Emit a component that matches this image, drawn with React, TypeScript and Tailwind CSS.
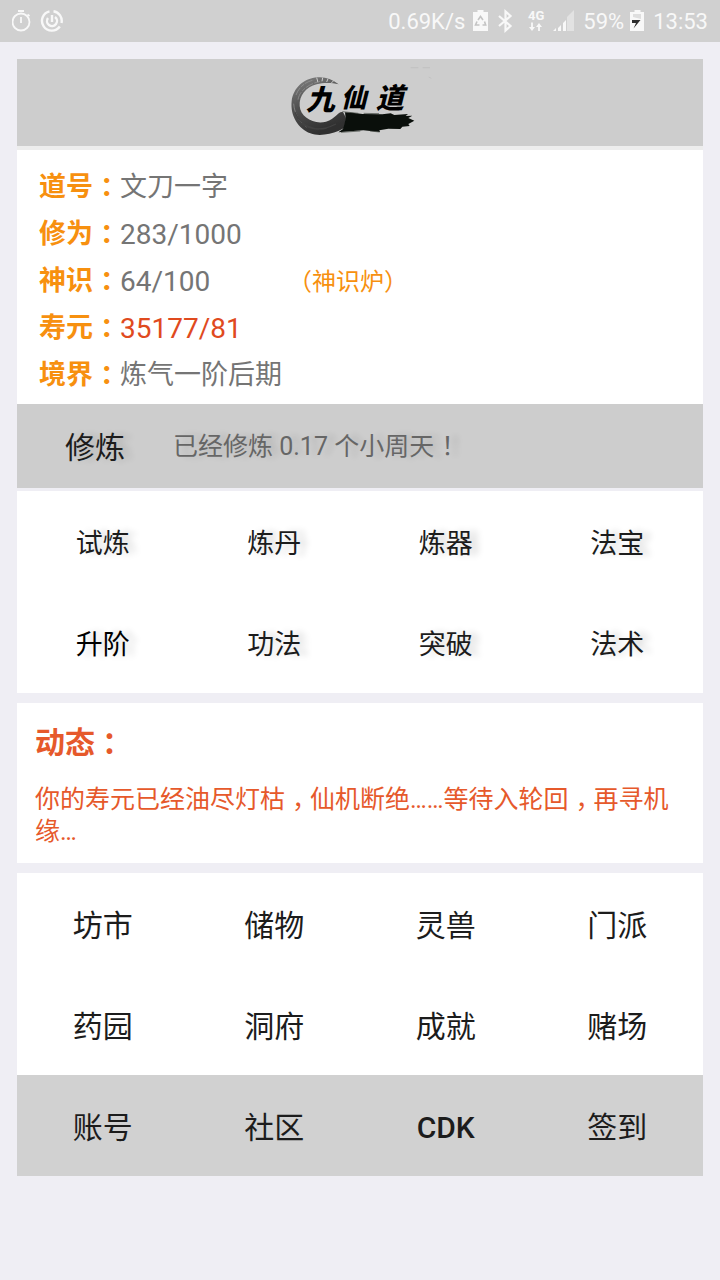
import type { ReactElement, ReactNode } from "react";

interface MenuItem {
  label: string;
  className?: string;
}

interface Stat {
  label: string;
  value: string;
  valueClass: string;
  extra?: string;
}

const stats: Stat[] = [
  { label: "道号", value: "文刀一字", valueClass: "text-[27px] text-[#757575]" },
  { label: "修为", value: "283/1000", valueClass: "text-[28px] text-[#757575]" },
  { label: "神识", value: "64/100", valueClass: "text-[28px] text-[#757575]", extra: "（神识炉）" },
  { label: "寿元", value: "35177/81", valueClass: "text-[28px] text-[#e04a1e]" },
  { label: "境界", value: "炼气一阶后期", valueClass: "text-[27px] text-[#757575]" },
];

const training: MenuItem[] = [
  { label: "试炼" },
  { label: "炼丹" },
  { label: "炼器" },
  { label: "法宝" },
  { label: "升阶", className: "text-black" },
  { label: "功法" },
  { label: "突破" },
  { label: "法术" },
];

const places: MenuItem[] = [
  { label: "坊市" },
  { label: "储物" },
  { label: "灵兽" },
  { label: "门派" },
  { label: "药园" },
  { label: "洞府" },
  { label: "成就" },
  { label: "赌场" },
];

const account: MenuItem[] = [
  { label: "账号" },
  { label: "社区" },
  { label: "CDK", className: "font-medium" },
  { label: "签到" },
];

// full-width punctuation, moved to the middle of its cell
function Mark({ children }: { children: ReactNode }): ReactElement {
  return <span className="-mr-[7px] pl-[7px]">{children}</span>;
}

function StatusBar(): ReactElement {
  return (
    <div className="flex h-[42px] items-center bg-[#d0d0d0] px-3 text-[22px] text-[#f8f8f8]">
      <svg width="20" height="24" viewBox="0 0 20 24" fill="none" stroke="currentColor" strokeWidth="1.8" aria-hidden="true">
        <circle cx="9" cy="13" r="8.5" />
        <path d="M6 2h6M9 8v6M15.5 5.5l2 1.5" />
      </svg>
      <svg className="ml-2" width="24" height="24" viewBox="0 0 24 24" fill="none" stroke="currentColor" strokeWidth="2.4" aria-hidden="true">
        <path d="M13.5 2.2A9.8 9.8 0 0 1 21.5 14M19.8 17.5A9.8 9.8 0 1 1 9.5 2.3" />
        <path d="M15 8a5 5 0 1 1-7 1M12 6v7" />
      </svg>
      <span className="ml-auto">0.69K/s</span>
      <svg className="ml-2" width="16" height="24" viewBox="0 0 16 24" aria-hidden="true">
        <path d="M4.5 1h6v2H15v19H0V3h4.5z" fill="currentColor" />
        <path d="M5 11L7.5 7.5l2.5 3.5M11.5 12.5l1.2 3.5H9.5M6.5 16h-4L4 12.5" fill="none" stroke="#c4c4c4" strokeWidth="1.6" />
      </svg>
      <svg className="ml-2" width="16" height="24" viewBox="0 0 16 24" fill="none" stroke="currentColor" strokeWidth="2.2" aria-hidden="true">
        <path d="M2 7l11.5 10-5 4.5v-19l5 4.5L2 17" />
      </svg>
      <svg className="ml-3.5" width="20" height="24" viewBox="0 0 20 24" aria-hidden="true">
        <text x="1" y="11" fontSize="13" fontWeight="700" fill="currentColor">4G</text>
        <path d="M5 13.5v5M12 22v-5" stroke="currentColor" strokeWidth="1.8" />
        <path d="M2 18h6l-3 4zM9 18h6l-3-4z" fill="currentColor" />
      </svg>
      <svg className="ml-1.5" width="22" height="24" viewBox="0 0 22 24" aria-hidden="true">
        <path d="M0 22h3v-3zM5 22h3v-6l-3 3zM10 22h3V11l-3 3z" fill="currentColor" />
        <path d="M14 22h7V1l-7 7z" fill="#e2e2e2" />
      </svg>
      <span className="ml-2">59%</span>
      <svg className="ml-1.5" width="15" height="24" viewBox="0 0 15 24" aria-hidden="true">
        <path d="M4.5 1h6v2H14v19H0V3h4.5z" fill="currentColor" />
        <path d="M3 5h8v5L3 8z" fill="#dedede" />
        <path d="M2 11h8.5l-7 8.5L6 14H2z" fill="#2c2c2c" />
      </svg>
      <span className="ml-2">13:53</span>
    </div>
  );
}

function Logo(): ReactElement {
  return (
    <svg className="h-[87px] w-[180px]" viewBox="0 12 540 261" role="img" aria-label="九仙道">
      <defs>
        <linearGradient id="ink" x1="0" y1="0" x2="0.4" y2="1">
          <stop offset="0" stopColor="#858585" />
          <stop offset="0.5" stopColor="#505050" />
          <stop offset="1" stopColor="#303030" />
        </linearGradient>
      </defs>
      <path
        d="M206 88C186 72 165 65 143 67C101 70 70 99 65 138C60 184 86 222 121 235C148 245 181 237 205 228L224 218C230 200 228 182 218 171C205 168 198 190 168 200C130 210 91 185 89 153C87 122 108 96 140 88C161 82 185 83 206 88Z"
        fill="url(#ink)"
      />
      <path d="M78 120C87 96 106 80 132 75M84 134C88 109 112 88 150 79M71 146C73 174 87 201 110 216" fill="none" stroke="#999" strokeWidth="2" strokeDasharray="25 4 12 3" />
      <path d="M76 174C91 209 128 229 170 219M94 205C121 226 156 228 198 207" fill="none" stroke="#414141" strokeWidth="4" />
      <path d="M140 68l4 14M158 68l-2 11M174 71l-4 10M191 78l-7 5" stroke="#cdcdcd" strokeWidth="3" />
      <path
        d="M225 172L246 173L278 177L337 178L362 175L373 180L414 177L407 183L427 182L415 189L433 197L415 207L419 213L397 215L391 222L355 221L328 226L330 231L280 226L240 229L205 232L219 222C226 204 228 188 225 172Z"
        fill="#0a0f0b"
      />
      <path d="M217 170l48 5M281 175l46 1M213 232l58-4M300 228l29 3" stroke="#394039" strokeWidth="2" />
      <path d="M422 38h23M458 38h22M476 66l8 4" stroke="#aaa" strokeWidth="1" />
      <g fill="#000" fontWeight="900" fontStyle="italic" className="font-['Noto_Sans_CJK_SC',sans-serif]">
        <text x="108" y="165" fontSize="86">九</text>
        <text x="212" y="156" fontSize="78">仙</text>
        <text x="318" y="158" fontSize="84">道</text>
      </g>
    </svg>
  );
}

function MenuGrid({ items, buttonClass }: { items: MenuItem[]; buttonClass: string }): ReactElement {
  return (
    <div className="grid grid-cols-4">
      {items.map((item) => (
        <button key={item.label} type="button" className={`h-[101px] cursor-pointer ${buttonClass} ${item.className ?? ""}`}>
          {item.label}
        </button>
      ))}
    </div>
  );
}

export default function App(): ReactElement {
  return (
    <div lang="zh-CN" className="min-h-screen bg-[#efeef4] pb-4 font-[Roboto,'Noto_Sans_CJK_SC',sans-serif] text-[#1c1c1c]">
      <StatusBar />
      <main className="px-[17px] pt-[17px]">
        <header className="flex justify-center border-b-4 border-[#ededed] bg-[#cdcdcd]">
          <Logo />
        </header>

        <dl className="bg-white px-[22px] pt-[14px] pb-[5px]">
          {stats.map((stat) => (
            <div key={stat.label} className="flex h-[47px] items-center">
              <dt className="w-[81px] shrink-0 text-[27px] font-bold whitespace-nowrap text-[#f7900f]">
                {stat.label}
                <Mark>：</Mark>
              </dt>
              <dd className={stat.extra ? `w-[168px] ${stat.valueClass}` : stat.valueClass}>{stat.value}</dd>
              {stat.extra && (
                <dd>
                  <button type="button" className="cursor-pointer text-2xl text-[#f7900f]">{stat.extra}</button>
                </dd>
              )}
            </div>
          ))}
        </dl>

        <section className="flex h-[84px] items-center bg-[#cdcdcd] pt-0.5 pl-12">
          <button type="button" className="cursor-pointer text-[30px] [text-shadow:8px_0_6px_rgba(0,0,0,0.12)]">修炼</button>
          <p className="ml-12 text-[25px] whitespace-nowrap text-[#666] [text-shadow:8px_0_6px_rgba(0,0,0,0.12)]">
            已经修炼 0.17 个小周天<Mark>！</Mark>
          </p>
        </section>

        <section className="mt-[3px] bg-white">
          <MenuGrid items={training} buttonClass="pt-1.5 text-[27px] [text-shadow:8px_0_6px_rgba(0,0,0,0.15)]" />
        </section>

        <section className="mt-[10px] bg-white px-[18px] pt-4 pb-[15px] text-[#e6592b]">
          <h2 className="text-[30px] leading-[48px] font-bold">
            动态<Mark>：</Mark>
          </h2>
          <p className="pt-[17px] text-[25px] leading-8">
            你的寿元已经油尽灯枯<Mark>，</Mark>仙机断绝……等待入轮回<Mark>，</Mark>再寻机<wbr />缘…
          </p>
        </section>

        <section className="mt-[10px] bg-white">
          <MenuGrid items={places} buttonClass="pt-1 text-[30px]" />
        </section>
        <nav className="bg-[#d1d1d1]">
          <MenuGrid items={account} buttonClass="pt-1 text-[30px]" />
        </nav>
      </main>
    </div>
  );
}
